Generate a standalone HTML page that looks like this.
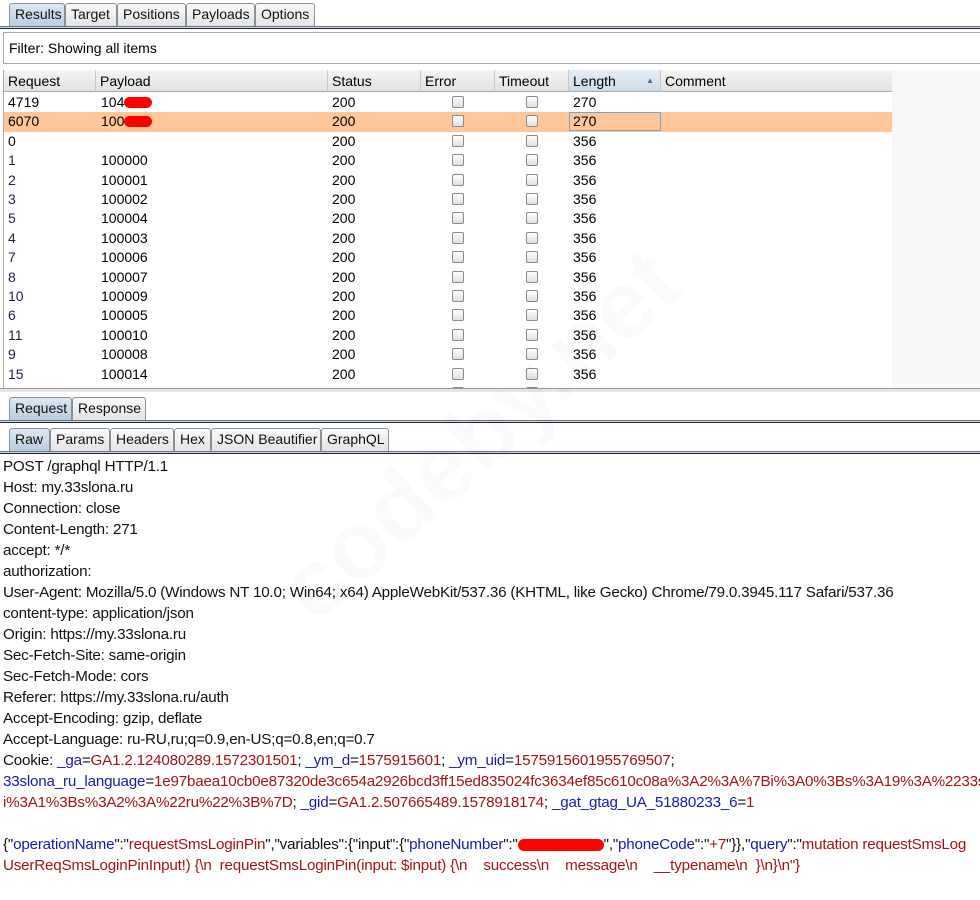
<!DOCTYPE html>
<html><head><meta charset="utf-8">
<style>
*{box-sizing:border-box;margin:0;padding:0}
body{width:980px;height:900px;overflow:hidden;background:#fff;font-family:"Liberation Sans",sans-serif;font-size:13px;color:#000;position:relative}
.tabbar{position:absolute;left:0;height:24px;width:980px}
.tab{position:absolute;top:3px;height:23px;border:1px solid #8a8f99;border-bottom:none;border-radius:3px 3px 0 0;background:linear-gradient(#fafafa,#e4e4e4);font-size:14px;line-height:21px;padding:0 5px;color:#111;white-space:nowrap;overflow:hidden}
.tab.sel{background:linear-gradient(#dde8f2,#b9cde0)}
.line{position:absolute;left:0;width:980px;height:3px;background:#c9d6e6;border-top:1px solid #6d7480;border-bottom:1px solid #1e2430}
.filter{position:absolute;left:3px;top:32px;width:980px;height:32px;border:1px solid #a9a9a9;background:#fff;font-size:14px;line-height:30px;padding-left:5px}
.tbl{position:absolute;left:3px;top:70px;width:889px;height:318px;background:#fff;border-left:1px solid #aaa;overflow:hidden}
.hdr{position:absolute;top:0;height:22px;background:linear-gradient(#f4f4f4,#e2e2e2);border-right:1px solid #c8c8c8;border-bottom:1px solid #aaa;font-size:14px;line-height:22px;padding-left:4px}
.row{position:absolute;left:0;width:889px;height:19.4px;font-size:14px;line-height:19px}
.row span{position:absolute}
.cb{position:absolute;width:12px;height:12px;border:1px solid #8a8a8a;border-radius:2px;background:linear-gradient(#fff,#e0e0e0);top:3px}
.req{position:absolute;left:3px;top:456px;font-size:15.2px;line-height:21px;letter-spacing:-0.2px;white-space:pre;color:#111}
.b{color:#1a1aa8}.r{color:#a31414}
.red{display:inline-block;background:#f00;border-radius:6px;height:12px;vertical-align:middle}
</style></head><body>
<div class="tabbar" style="top:0">
<div class="tab sel" style="left:9px;width:56px">Results</div>
<div class="tab" style="left:65px;width:52px">Target</div>
<div class="tab" style="left:117px;width:69px">Positions</div>
<div class="tab" style="left:186px;width:69px">Payloads</div>
<div class="tab" style="left:255px;width:60px">Options</div>
</div>
<div class="line" style="top:26px"></div>
<div class="filter">Filter: Showing all items</div>
<div style="position:absolute;left:892px;top:70px;width:88px;height:318px;background:#f8f8f8"></div>
<div class="tbl">
<div class="hdr" style="left:0;width:92px">Request</div>
<div class="hdr" style="left:92px;width:232px">Payload</div>
<div class="hdr" style="left:324px;width:93px">Status</div>
<div class="hdr" style="left:417px;width:74px">Error</div>
<div class="hdr" style="left:491px;width:74px">Timeout</div>
<div class="hdr" style="left:565px;width:92px;background:linear-gradient(#e6eef6,#cddbe8)">Length<span style="position:absolute;right:6px;font-size:8px;color:#4a6a90">▲</span></div>
<div class="hdr" style="left:657px;width:232px">Comment</div>
<div id="rows"></div>
</div>
<div style="position:absolute;left:0;top:388px;width:980px;height:4px;background:#e6e6e6;border-top:1px solid #999"></div>
<div class="tabbar" style="top:394px">
<div class="tab sel" style="left:9px;width:63px">Request</div>
<div class="tab" style="left:72px;width:74px">Response</div>
</div>
<div class="line" style="top:420px"></div>
<div class="tabbar" style="top:425px">
<div class="tab sel" style="left:9px;width:41px">Raw</div>
<div class="tab" style="left:50px;width:60px">Params</div>
<div class="tab" style="left:110px;width:64px">Headers</div>
<div class="tab" style="left:174px;width:37px">Hex</div>
<div class="tab" style="left:211px;width:110px">JSON Beautifier</div>
<div class="tab" style="left:321px;width:68px">GraphQL</div>
</div>
<div class="line" style="top:451px"></div>
<div class="req">POST /graphql HTTP/1.1
Host: my.33slona.ru
Connection: close
Content-Length: 271
accept: */*
authorization:
User-Agent: Mozilla/5.0 (Windows NT 10.0; Win64; x64) AppleWebKit/537.36 (KHTML, like Gecko) Chrome/79.0.3945.117 Safari/537.36
content-type: application/json
Origin: https://my.33slona.ru
Sec-Fetch-Site: same-origin
Sec-Fetch-Mode: cors
Referer: https://my.33slona.ru/auth
Accept-Encoding: gzip, deflate
Accept-Language: ru-RU,ru;q=0.9,en-US;q=0.8,en;q=0.7
Cookie: <span class="b">_ga</span>=<span class="r">GA1.2.124080289.1572301501</span>; <span class="b">_ym_d</span>=<span class="r">1575915601</span>; <span class="b">_ym_uid</span>=<span class="r">1575915601955769507</span>;
<span class="b">33slona_ru_language</span>=<span class="r">1e97baea10cb0e87320de3c654a2926bcd3ff15ed835024fc3634ef85c610c08a%3A2%3A%7Bi%3A0%3Bs%3A19%3A%2233s</span>
<span class="r">i%3A1%3Bs%3A2%3A%22ru%22%3B%7D</span>; <span class="b">_gid</span>=<span class="r">GA1.2.507665489.1578918174</span>; <span class="b">_gat_gtag_UA_51880233_6</span>=<span class="r">1</span>

{"<span class="b">operationName</span>":"<span class="r">requestSmsLoginPin</span>","variables":{"input":{"<span class="b">phoneNumber</span>":"<span class="red" style="width:86px"></span>","<span class="b">phoneCode</span>":"<span class="r">+7</span>"}},"<span class="b">query</span>":"<span class="r">mutation requestSmsLog</span>
<span class="r">UserReqSmsLoginPinInput!) {\n  requestSmsLoginPin(input: $input) {\n    success\n    message\n    __typename\n  }\n}\n"}</span></div>
<div style="position:absolute;left:230px;top:380px;transform:rotate(-42deg);font-size:96px;font-weight:bold;color:rgba(0,0,0,0.02);white-space:nowrap">codeby.net</div>
<script>
var d=[["4719","104",200,270],["6070","100",200,270],["0","",200,356],["1","100000",200,356],["2","100001",200,356],["3","100002",200,356],["5","100004",200,356],["4","100003",200,356],["7","100006",200,356],["8","100007",200,356],["10","100009",200,356],["6","100005",200,356],["11","100010",200,356],["9","100008",200,356],["15","100014",200,356],["","",null,null]];
var h="";d.forEach(function(r,i){var t=23+i*19.4;var bg=i==1?"background:#ffc699;":"";
h+='<div class="row" style="top:'+t+'px;'+bg+'">';
var c=i>2&&i<15?'color:#1c2244':'';
h+='<span style="left:4px;'+c+'">'+r[0]+'</span><span style="left:97px">'+r[1]+(i<2?'<span class="red" style="position:relative;display:inline-block;width:28px;height:11px;top:-1px"></span>':'')+'</span>';
if(r[2])h+='<span style="left:328px">'+r[2]+'</span><span style="left:565px;'+(i==1?'border:1px solid #7aa4c8;width:92px;height:19px;padding-left:3px;line-height:17px':'padding-left:4px')+'">'+r[3]+'</span>';
h+='<div class="cb" style="left:448px"></div><div class="cb" style="left:522px"></div></div>';});
document.getElementById("rows").innerHTML=h;
</script>
</body></html>
